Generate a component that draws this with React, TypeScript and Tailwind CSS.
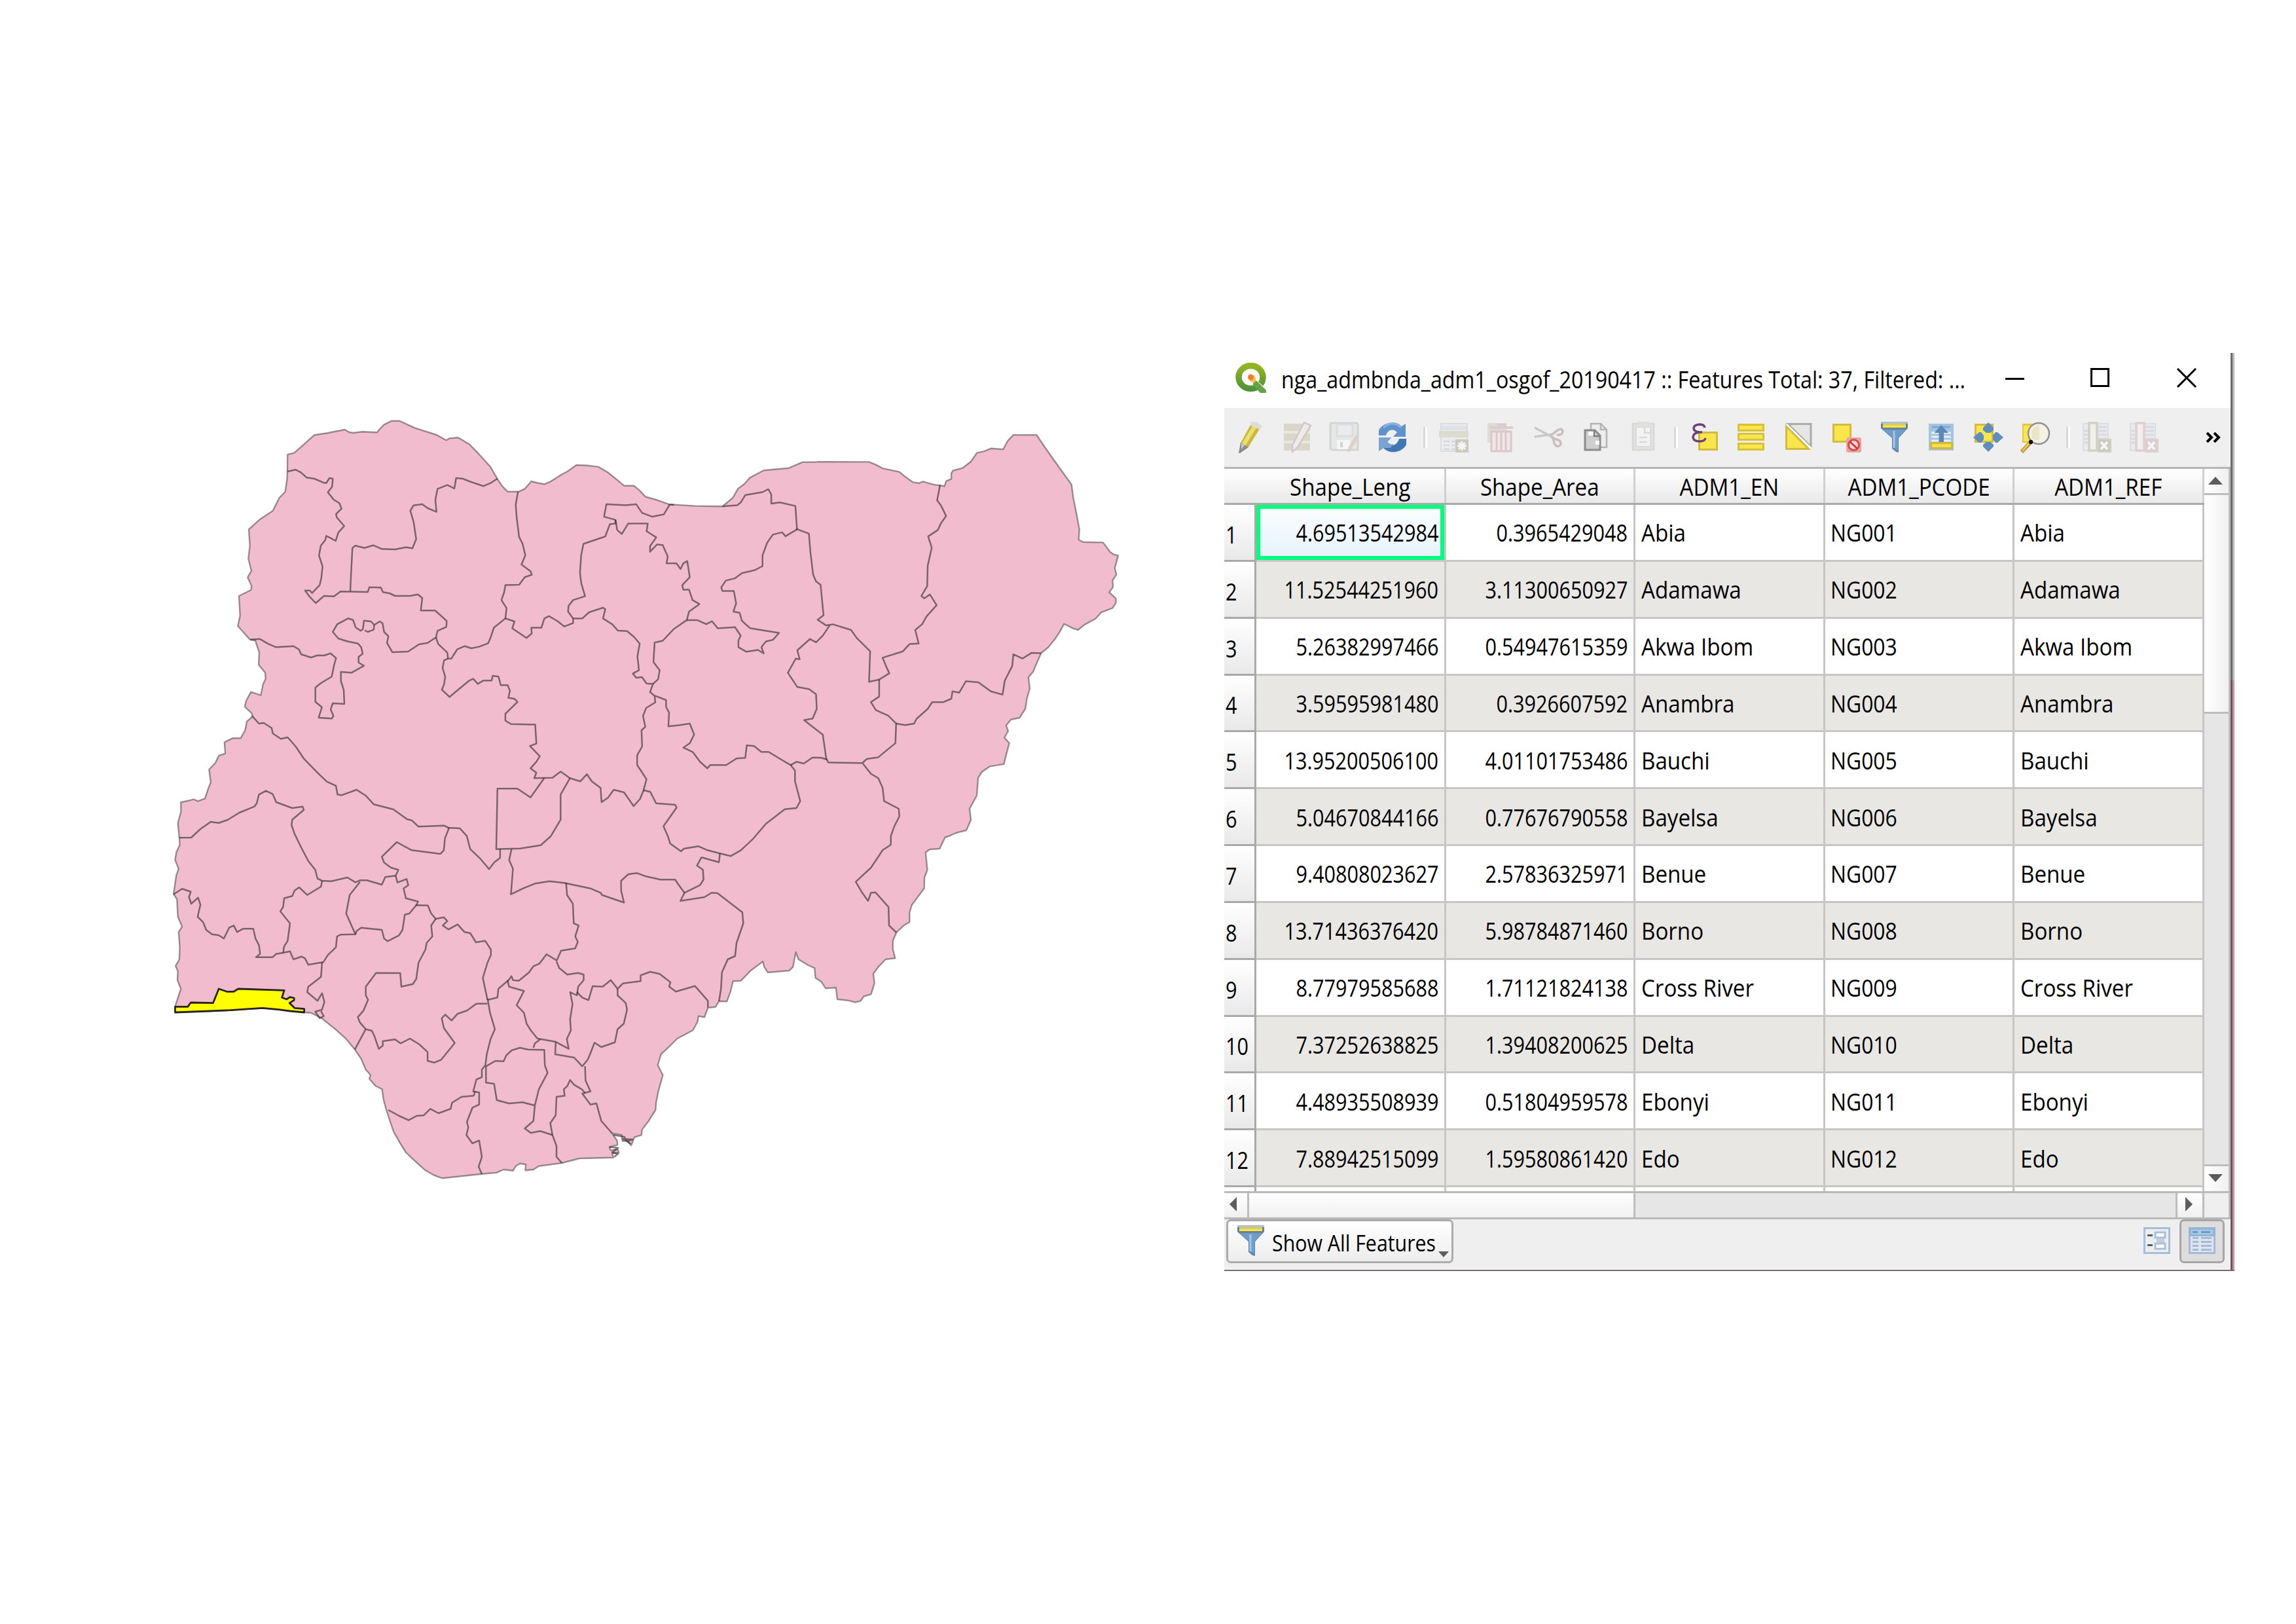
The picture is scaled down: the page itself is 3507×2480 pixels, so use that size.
import React from "react";

/* ---------- Map geometry ---------- */

type Frame = [number, number, number, number];

// Survey sheets: origin x, origin y, units per pixel horizontally and vertically.
const A: Frame = [250, 620, 3, 3];
const B: Frame = [700, 620, 2.851, 2.851];
const C: Frame = [1200, 640, 2.9037, 2.9037];
const D: Frame = [250, 1080, 2.851, 3];
const E: Frame = [750, 1080, 2.24, 3];
const F: Frame = [450, 1400, 2.4123, 3];
const P: Frame = [0, 0, 1, 1];

function pts([ox, oy, sx, sy]: Frame, data: string): string {
  return data
    .trim()
    .split(/\s+/)
    .map((p) => {
      const [x, y] = p.split(",").map(Number);
      return `${(ox + x / sx).toFixed(1)},${(oy + y / sy).toFixed(1)}`;
    })
    .join(" ");
}

const outline = [
  pts(A, "568,222 598,215 640,178 690,133 750,124 780,118 830,108 850,120 870,123 910,118 978,121 990,105 1010,85 1045,68 1080,68 1150,100 1250,132 1295,157 1310,148 1350,145 1400,175 1440,215"),
  pts(B, "140,265 170,317 190,347 215,373 262,373 290,360 318,328 345,335 375,340 400,330 450,298 475,285 515,257 560,259 610,265 650,288 690,320 722,347 765,347 790,368 815,395 860,407 918,428 1030,435 1150,437 1195,400 1218,360 1245,340 1270,312 1330,280 1440,270 1500,244 1560,244"),
  pts(C, "145,189 370,190 400,202 430,218 505,234 530,255 565,280 590,284 610,277 655,290 705,297 712,275 735,265 735,240 743,228 785,217 822,188 848,150 880,143 910,130 965,134 985,97 1010,70 1113,70 1150,125 1210,210 1268,290 1275,345 1290,420 1303,490 1300,535 1320,545 1408,547 1440,590 1455,600 1475,605 1460,660 1467,690 1450,715 1452,745 1435,768 1465,795 1465,815 1450,838 1400,857 1375,885 1325,912 1297,935 1275,928 1235,908 1215,945 1195,975 1165,1012 1133,1038 1110,1090 1098,1120 1077,1145 1083,1195 1070,1240 1063,1285 1037,1325 1000,1332 978,1358 987,1383 970,1412 992,1437 978,1490 968,1530 905,1540 870,1565"),
  pts(P, "1494,1188 1492,1215 1481,1235 1483,1252 1476,1268 1460,1272"),
  pts(E, "1568,590 1553,597 1535,648 1500,652 1487,665 1493,745 1483,780 1482,830 1440,905 1432,940 1432,985 1412,1000 1387,1032 1375,1070 1375,1110 1383,1150 1350,1155 1325,1190 1308,1220 1312,1265 1300,1315 1275,1325 1265,1345 1247,1352 1220,1343 1185,1338 1180,1285 1145,1288 1130,1258 1110,1240 1107,1195 1085,1182 1052,1155 1043,1122 1033,1190 1020,1207 947,1215 935,1190 930,1165 890,1205 855,1253 828,1255 820,1300 807,1348 780,1347 768,1373 745,1376"),
  pts(F, "1523,417 1510,460 1488,455 1485,480 1468,520 1410,558 1380,595 1350,630 1338,680 1357,725 1340,800 1332,850 1330,885 1305,935 1280,975 1278,1000 1252,1010 1240,1048 1225,1025 1208,1028 1205,1000 1170,992 1188,1025 1190,1045 1160,1055 1165,1070 1190,1065 1195,1080 1170,1085 1175,1103 1050,1107 985,1128 900,1142 880,1158 850,1162 852,1135 830,1130 815,1142 805,1163 770,1158 745,1172 690,1178 545,1198 515,1185 480,1160 440,1115 410,1080 390,1040 365,985 355,950 338,885 328,840 322,790 298,775 275,742 280,725 262,700 245,650 222,608 190,560 150,515 100,465 60,440"),
  pts(D, "615,1398 500,1385 430,1378 290,1388 200,1392 50,1398 50,1370 75,1290 60,1250 62,1210 52,1185 68,1155 70,1100 65,1030 80,1005 62,960 58,880 43,855 55,770 65,740 50,700 55,665 70,630 68,600 62,530 75,480 75,435 100,430 130,422 150,430 180,418 195,370 205,345 198,285 225,255 240,222 268,212 265,160 300,142 335,142 355,105 362,65 385,45"),
  pts(A, "405,1410 372,1378 378,1350 400,1310 445,1325 455,1275 467,1250 465,1222 435,1185 438,1130 420,1075 395,1070 340,1008 350,960 345,870 400,843 403,825 385,785 402,755 388,700 395,640 390,565 440,520 500,480 530,420 557,393 566,330"),
].join(" ");

const borders: string[] = [
  pts(A, "568,300 605,292 630,305 655,328 690,333 735,352 745,353 760,330 775,333 772,370 752,395 780,430 805,445 815,470 790,495 793,510 827,550 800,580 788,618 765,605 745,595 740,615 720,640 712,685 728,735 722,790 715,820 680,857 670,845 648,845 670,875 697,903 735,870 780,872 810,850 935,852 943,830 995,832 1005,853 1035,858 1060,870 1130,870 1165,863 1185,880 1178,937 1243,937 1270,960 1297,985 1295,1012 1255,1030 1248,1060 1210,1085 1170,1092 1120,1125 1048,1128 1023,1085 1030,1055 1010,1035 1003,995 990,987 965,1003 950,987 918,983 913,1022 903,1030 880,1015 868,980 845,973 795,1000 775,1035 800,1065 840,1078 890,1088 905,1105 912,1135 893,1150 893,1175 918,1190 860,1222 812,1218 812,1260 825,1300 828,1365 775,1362 765,1390 778,1420 770,1432 710,1428 725,1380 695,1355 695,1290 720,1270 770,1240 780,1190 790,1155 765,1133 735,1143 705,1142 675,1152 630,1138 620,1115 595,1100 515,1105 480,1090 440,1067 398,1070"),
  pts(A, "965,1003 962,1025 935,1035 922,1028"),
  pts(A, "855,850 857,800 865,650 878,640 920,650 960,638 1000,655 1060,657 1110,647 1140,652 1157,610 1145,530 1130,480 1145,455 1185,450 1210,468 1250,485 1245,430 1255,380 1300,362 1332,378 1340,330 1370,333 1420,352 1465,367 1500,352 1529,333"),
  pts(A, "1248,1060 1258,1090 1300,1130 1303,1157 1318,1157 1345,1115 1380,1100 1410,1110") + " " +
    pts(B, "90,1048 130,1033 140,1010 155,965 205,925 210,880 188,845 200,810 205,780 265,778 290,745 320,735 315,720 275,690 292,650 280,600 265,570 255,490 250,430 260,373"),
  pts(A, "1303,1157 1285,1165 1278,1200 1290,1240 1285,1275 1275,1300 1310,1333 1400,1258") + " " +
    pts(B, "65,1188 85,1210 110,1195 145,1195 150,1175 175,1178 185,1215 215,1215 225,1240 218,1270 245,1275 258,1288 205,1340 205,1370 230,1385 335,1387 340,1470 312,1480 355,1525") + " " +
    pts(E, "155,250 135,280 155,300 148,325 210,323 238,295 270,325 305,340 328,307 345,340 375,370 378,435 400,415 420,378 455,390 488,453 510,420 522,380 532,330 515,295 500,265 500,220 517,180 515,105 528,90 520,40") + " " +
    pts(B, "818,1315 858,1290 855,1262 835,1245 848,1210 820,1208 800,1180 775,1183 760,1165 787,1150 780,1090 790,1035 765,1005 735,980 695,978 670,950 630,925 640,885 630,878 570,898 540,925 500,925 500,945 462,960 430,935 395,915 375,925 362,965 318,965 320,990 297,1010 275,995 235,968 245,938 205,925"),
  pts(B, "500,925 478,895 480,870 500,845 552,828 535,770 530,725 535,650 545,600 640,568 660,515 685,512 683,495 635,482 645,428 730,432 775,428 800,465 845,482 895,472 920,430 940,430"),
  pts(B, "685,495 692,540 712,557 740,512 825,512 820,545 862,572 835,610 835,635 865,603 890,605 912,655 907,685 950,685 968,710 980,685 997,675 1008,745 975,780 980,800 1005,800 1020,845 1050,862 1005,895 995,932 940,970 890,1022 855,1030 850,1115 877,1150 870,1190 848,1210"),
  pts(B, "995,932 1040,932 1080,950 1105,937 1130,968 1205,963 1230,1000 1220,1020 1220,1050 1255,1070 1305,1062 1330,1077 1320,1050 1340,1025 1370,1018 1397,988 1330,977 1270,967 1235,935 1225,900 1198,895 1210,860 1200,805 1150,805 1145,790 1165,760 1205,750 1235,728 1290,715 1325,697 1325,650 1345,595 1370,560 1410,550 1425,567 1475,537"),
  pts(B, "1150,437 1215,432 1230,420 1250,388 1325,375 1350,362 1363,385 1363,425 1400,420 1468,435 1475,537"),
  pts(C, "47,487 103,508 110,590 122,690 135,720 155,735 168,870 142,890 180,915 210,910 290,935 315,970 375,1030 370,1165 415,1155 460,1127 445,1095 430,1058 520,1030 550,997 590,995 575,935 605,910 625,875 670,825 640,778 615,795 602,785 628,740 630,650 648,570 632,520 675,492 690,460 712,430 690,385 672,360 685,292"),
  pts(C, "195,915 165,960 135,990 108,975 52,1025 62,1065 45,1062 10,1125 52,1188 105,1198 135,1220 138,1285 120,1328 82,1335 165,1400 180,1505 190,1523 340,1525 360,1507 410,1500 487,1437 490,1350 455,1315 400,1290 378,1255 415,1230 415,1155"),
  pts(C, "490,1350 530,1357 570,1350 580,1330 630,1285 650,1255 700,1255 735,1240 740,1207 770,1213 800,1162 855,1167 910,1207 962,1222 972,1160 1005,1095 1010,1043 1050,1062 1090,1037 1133,1038"),
  pts(B, "858,1262 905,1280 905,1310 918,1335 915,1395 960,1390") + " " +
    pts(E, "680,75 695,125 680,165 658,185 690,205 715,250 740,280 750,265 805,265 840,235 870,232 875,175 900,178 925,205 950,205 1000,245 1025,265 1040,290 1040,340 1058,430 1045,462 1005,467 940,535 895,605 855,655 820,682 783,670 740,655 710,637 660,648 650,660 613,625 605,590 590,545 635,460 630,447 565,440 545,388 522,380"),
  pts(E, "1025,265 1045,250 1070,258 1100,230 1130,232 1150,240"),
  pts(E, "1272,258 1300,305 1325,325 1340,370 1345,430 1395,465 1397,500 1380,545 1368,590 1368,630 1340,655 1300,735 1248,800 1270,850 1290,887 1300,850 1315,848 1360,915 1362,1000 1387,1032"),
  pts(E, "182,325 135,413 90,373 22,373 18,650 100,647 170,632 205,590 238,515 238,400 270,325"),
  pts(E, "783,670 780,710 720,688 705,725 725,745 727,790 715,815 662,850 640,810 630,790 580,790 530,775 500,760 470,765 445,795 445,840 455,895 380,860 375,850 340,830 250,805 200,797 150,808 110,830 68,857 75,740 62,700 70,650"),
  pts(E, "662,850 648,887 730,870 755,850 775,852 860,940 863,990 840,1080 835,1140 810,1155 790,1215 787,1290 780,1347"),
  pts(E, "257,805 260,860 280,900 283,990 300,1000 288,1050 297,1075 288,1105 240,1115 225,1160 190,1132 165,1175 145,1187 130,1215 95,1253 75,1250 70,1232 60,1250 25,1290 22,1330 -10,1340"),
  pts(D, "385,40 415,75 435,72 455,85 470,95 475,120 510,145 540,138 575,180 610,235 665,295 710,340 750,360 757,400 775,403 840,378 880,405 915,445 1000,468 1060,513 1080,518 1110,547 1220,542 1240,552 1290,555 1320,590 1335,650 1380,695 1417,742 1440,710 1465,690 1465,650"),
  pts(D, "68,598 120,597 160,558 205,525 240,530 280,515 330,483 395,455 405,440 415,400 445,383 475,398 490,435 560,462 605,455 610,470 560,515 557,540 570,580 600,645 630,705 660,745 670,785 690,795 730,797 800,780 835,802 855,793 885,793 950,813 965,778 1010,772 1022,745 990,735 960,712 950,685 1015,618 1080,655 1205,672 1220,655 1225,600 1243,552"),
  pts(D, "43,857 80,832 118,845 110,870 120,900 150,872 160,905 148,960 172,985 185,1020 210,1040 240,1045 262,1060 285,1010 305,1000 320,1030 345,1015 390,1015 400,1060 415,1090 420,1130 402,1145 475,1145 490,1130 520,1125 525,1095 540,1070 550,990 508,935 520,915 525,875 560,865 570,840 590,825 625,860 685,822 690,795"),
  pts(D, "520,1125 550,1118 565,1155 600,1142 615,1150 630,1180 695,1168 715,1135 750,1100 755,1050 770,1042 835,1040 820,1005 795,945 810,860 855,800"),
  pts(D, "835,1040 840,1025 860,1010 950,1020 960,1060 975,1072 1025,1045 1040,1020 1050,950 1070,945 1100,907 1150,908 1165,945 1185,970 1220,962 1235,980 1215,1000 1240,1018 1280,995 1310,1030 1335,1035 1360,1077 1400,1070 1425,1110 1425,1135 1410,1170 1390,1240 1410,1340"),
  pts(D, "1100,907 1108,890 1055,875 1045,830 1065,815 1058,787 1018,803 1010,772"),
  pts(D, "1185,970 1165,1000 1170,1050 1145,1080 1140,1110 1110,1170 1100,1245 1085,1268 1035,1280 1030,1218 925,1217 880,1280 880,1320 890,1340 870,1390 845,1420 855,1445 880,1475"),
  pts(D, "690,1168 685,1235 630,1280 625,1305 670,1345 690,1310 700,1350 690,1385 660,1395 680,1425 697,1415 685,1392"),
  pts(F, "222,608 262,515 285,522 295,550 310,605 325,590 325,570 370,562 390,580 425,558 460,585 490,620 490,660 515,668 540,655 590,578 550,510 542,465 555,448 578,475 600,445 635,430 670,398 710,398"),
  pts(F, "711,375 720,440 738,515 722,560 708,630 703,680 690,700 690,735 670,745 658,800 680,805 680,860 655,875 635,940 640,965 633,1000 655,1038 680,1025 690,1100 678,1145 690,1178"),
  pts(F, "345,885 385,912 420,932 450,912 475,910 500,880 530,900 575,880 580,852 615,825 660,820 665,800"),
  pts(F, "785,290 790,320 845,340 818,405 845,440 855,490 870,520 895,558 960,572 1010,605 1003,560 1018,520 1015,470 1024,400 1015,345 1040,360 1045,320 1065,290 1065,265 1045,257 1005,265 975,235 965,205"),
  pts(F, "1040,345 1060,370 1083,382 1098,318 1135,320 1165,290 1190,330 1210,305 1275,295 1275,268 1310,252 1345,262 1385,300 1380,320 1405,343 1475,317 1523,385 1523,415"),
  pts(F, "1190,330 1190,360 1220,395 1225,425 1213,490 1190,515 1180,575 1130,597 1105,577 1090,625 1080,655 1060,685 1030,645 960,630 962,575"),
  pts(F, "1070,685 1072,750 1090,800 1060,810 1090,860 1112,855 1130,935 1170,992"),
  pts(F, "1070,808 1058,790 1030,770 1015,748 1005,775 992,790 995,820 965,825 962,910 942,945 950,1000 965,1050 965,1100 985,1128"),
  pts(F, "950,1000 905,982 870,990 848,970 880,935 885,865 840,850 790,855 745,840 735,765 705,760 705,685 740,660 770,662 780,635 800,612 830,600 860,608 920,610 922,680 932,715 900,790 885,865"),
  pts(F, "905,562 885,580 880,600"),
  pts(F, "1175,1000 1215,1008 1225,1030 1245,1020 1210,1018 1238,1040"),
  pts(F, "1160,1055 1192,1058 1170,1080 1192,1085 1178,1100"),
];

const lagos = pts(
  D,
  "50,1398 50,1372 105,1372 118,1353 215,1355 225,1330 240,1290 275,1303 305,1303 325,1290 525,1297 515,1330 535,1338 550,1328 568,1332 568,1342 548,1355 570,1378 612,1382 612,1398 550,1392 500,1385 430,1378 290,1388 200,1392",
);

function NigeriaMap() {
  return (
    <svg className="block h-[2480px] w-[1870px] shrink-0" viewBox="0 0 1870 2480">
      <polygon points={outline} fill="#f2bccf" stroke="#232323" strokeOpacity="0.45" strokeWidth="2.4" strokeLinejoin="round" />
      <g fill="none" stroke="#232323" strokeOpacity="0.58" strokeWidth="2.5" strokeLinejoin="round">
        {borders.map((b, i) => (
          <polyline key={i} points={b} />
        ))}
      </g>
      <polygon points={lagos} fill="#ffff00" stroke="#2a2420" strokeWidth="2.8" strokeLinejoin="round" />
    </svg>
  );
}

/* ---------- Icons ---------- */

function Icon({ children, faded = false }: { children: React.ReactNode; faded?: boolean }) {
  return (
    <div className="flex w-[72.2px] shrink-0 justify-center">
      <svg viewBox="0 0 48 48" className={faded ? "size-12 opacity-40" : "size-12"}>
        {children}
      </svg>
    </div>
  );
}

function Separator() {
  return (
    <div className="flex w-[22px] shrink-0 pl-[11px]">
      <div className="h-8 w-[3px] bg-[#d9d9d9]" />
      <div className="h-8 w-[3px] bg-white" />
    </div>
  );
}

function FunnelShape() {
  return (
    <>
      <path d="M4 1h41v9L31 25v22l-4-1-6-5V25L4 10z" fill="#5d83ad" />
      <path d="M7 12h35L30 24v20l-8-5V24z" fill="#6f9dcd" />
      <path d="M24 14v26" stroke="#a9c5e2" strokeWidth="3" />
      <path d="M4 0h41v3H4z" fill="#b5bfca" />
      <path d="M7 3h35v6H7z" fill="#f7e54a" />
      <path d="M7 3h35v3H7z" fill="#d9cf58" />
      <path d="M7 9h35v3H7z" fill="#6b8290" />
    </>
  );
}

const Pencil = () => (
  <>
    <path d="M24 5l14 6-18 29-12-6z" fill="#cdb937" />
    <path d="M27 7l6 2-17 28-6-2z" fill="#eadf72" />
    <path d="M25 0h8l9 7-4 5-14-6z" fill="#dcdcdc" />
    <path d="M9 32l12 7-13 9H6z" fill="#8b8b8b" />
    <path d="M10 33l5 3-5 6z" fill="#c9c9c9" />
  </>
);

const EditRows = () => (
  <>
    <path d="M3 3h40v11H3zM3 18h40v11H3zM3 33h40v11H3z" fill="#b9b491" />
    <path d="M3 14h40v4H3zM3 29h40v4H3z" fill="#dedbc8" />
    <path d="M34 1l10 5-20 33-8 7V36z" fill="#efe3e3" stroke="#a58f90" strokeWidth="2.5" />
  </>
);

const Floppy = () => (
  <>
    <path d="M2 5q0-3 3-3h36q3 0 3 3v38H5q-3 0-3-3z" fill="#dadfd8" stroke="#a9b0a5" strokeWidth="3" />
    <path d="M12 4h24v18H12z" fill="#e4e6ea" stroke="#bfc4ca" strokeWidth="3" />
    <path d="M12 28h20v14H12z" fill="#fff" />
    <path d="M17 31h4v8h-4z" fill="#a8a8a8" />
    <path d="M41 20l5 3-14 22-4 2 1-7z" fill="#c3a294" />
  </>
);

const Refresh = () => (
  <>
    <path d="M3 21V13C8 2 28-4 38 7l6-4v20H25l6-7C24 9 16 13 14 21z" fill="#5f93cc" />
    <path d="M10 9c8-8 20-8 27 0" stroke="#8fb5de" strokeWidth="3" fill="none" />
    <path d="M45 26v9C38 48 19 50 10 40l-7 5V24h19l-6 7c7 8 15 5 18-5z" fill="#3f78b4" />
    <path d="M3 24h19l-6 7c3 3 6 4 9 3l-4 6H10l-7 5z" fill="#79a4d4" />
  </>
);

const AddRow = () => (
  <>
    <path d="M4 3h40v42H4z" fill="#e6eaf2" stroke="#b9c3cf" strokeWidth="2" />
    <path d="M5 6h38v7H5z" fill="#c3d0dd" />
    <path d="M1 14h45v10H1z" fill="#c3bf9e" />
    <path d="M8 30h9M20 30h9M8 36h9M20 36h9M8 42h9M20 42h9" stroke="#b0b8c4" strokeWidth="2.5" />
    <path d="M26 27h20v20H26z" fill="#99966f" />
    <path d="M36 30v14M29 37h14M31 32l10 10M41 32L31 42" stroke="#fff" strokeWidth="3" />
  </>
);

const Trash = () => (
  <>
    <path d="M3 2h29v30H3z" fill="#c5c2ac" />
    <path d="M6 7h36v4H6z" fill="#c09a9f" />
    <path d="M9 15h30v30H9z" fill="#f0dfe0" stroke="#bd8c93" strokeWidth="3" />
    <path d="M17 16v28M24 16v28M31 16v28" stroke="#bd8c93" strokeWidth="3" />
    <path d="M18 3h14v4H18z" fill="#c09a9f" />
  </>
);

const Scissors = () => (
  <>
    <path d="M3 9l28 15M3 23l28-4" stroke="#8f8f8f" strokeWidth="3.5" fill="none" />
    <path d="M28 21l10-8q7-4 8 2-1 6-9 5M28 23l8 4q8 1 7 8-4 5-9 0l-3-9" stroke="#91777a" strokeWidth="3.5" fill="none" />
  </>
);

const Copy = () => (
  <>
    <path d="M17 3h15l9 9v27H17z" fill="#ededed" stroke="#b4b4b4" strokeWidth="2.5" />
    <path d="M32 3v9h9" fill="none" stroke="#b4b4b4" strokeWidth="2.5" />
    <path d="M8 13h15l8 8v22H8z" fill="#cfcfcf" stroke="#8c8c8c" strokeWidth="3" />
    <path d="M13 15h8v6h-8zM24 29h6v6h-6z" fill="#fafafa" />
    <path d="M22 13v9h9" fill="none" stroke="#7f7f7f" strokeWidth="2.5" />
  </>
);

const Paste = () => (
  <>
    <path d="M8 3h32v40H8z" fill="#cfcfca" stroke="#b5b5ae" strokeWidth="2.5" />
    <path d="M16 0h17v5H16z" fill="#c9c9c9" />
    <path d="M13 8h22v30H13z" fill="#fafafa" stroke="#bdbdbd" strokeWidth="2" />
    <path d="M26 8v9h9M18 24h12M18 31h12" stroke="#bdbdbd" strokeWidth="2.5" fill="none" />
  </>
);

const Expression = () => (
  <>
    <path d="M15.500 16.500h27v26h-27z" fill="#fae64b" stroke="#d3bb3f" strokeWidth="3" />
    <path d="M24 9q-1-5-8-5-9 1-9 6t9 6h4-4q-10 1-10 8 1 6 10 6 8 0 9-5" fill="none" stroke="#6b4275" strokeWidth="3.500" />
  </>
);

const SelectAll = () => (
  <g fill="#fae64b" stroke="#d9c13c" strokeWidth="3">
    <path d="M3.500 4.500h38v9h-38zM3.500 18.500h38v9h-38zM3.500 33.500h38v9h-38z" />
  </g>
);

const Invert = () => (
  <>
    <path d="M7 3.500h35v35z" fill="#e6e6e6" stroke="#ababab" strokeWidth="3" />
    <path d="M4.500 7v34.500h34z" fill="#fae64b" stroke="#d3bb3f" strokeWidth="3" />
    <path d="M5 4l38 37" stroke="#fff" strokeWidth="2.500" />
    <path d="M8 4l35 34" stroke="#a8a8a8" strokeWidth="1.500" />
  </>
);

const Deselect = () => (
  <>
    <path d="M4.500 4.500h26v26h-26z" fill="#fae64b" stroke="#d3bb3f" strokeWidth="3" />
    <rect x="24" y="24" width="23" height="23" rx="3" fill="#e9a3a3" />
    <circle cx="35.500" cy="35.500" r="8" fill="#f6d7d7" stroke="#d94a4a" strokeWidth="3" />
    <path d="M30 31l11 10" stroke="#d63636" strokeWidth="3" />
  </>
);

const MoveTop = () => (
  <>
    <path d="M5 3h38v41H5z" fill="#a6c4e0" />
    <path d="M9 17h30M9 23h30M9 29h30" stroke="#e8f0f8" strokeWidth="3" />
    <path d="M10 8h28" stroke="#7eaad3" strokeWidth="3" />
    <path d="M20.500 34V17h-7L24 5l11 12h-7v17z" fill="#5f87b5" />
    <path d="M8.500 32.500h32v8h-32z" fill="#f5e04b" stroke="#d1b838" strokeWidth="3" />
  </>
);

const Pan = () => (
  <>
    <path d="M4.500 4.500h26v26h-26z" fill="#fae64b" stroke="#d3bb3f" strokeWidth="3" />
    <path d="M24 1l8 8v4l-5 4h-6l-5-4V9zM24 46l8-8v-3l-5-4h-6l-5 4v3zM1 24l9-8h3l4 5v6l-4 5h-3zM47 24l-9-8h-3l-4 5v6l4 5h3z" fill="#5f8dbd" />
    <path d="M24 18l6 6-6 6-6-6z" fill="#fae64b" />
  </>
);

const ZoomSelected = () => (
  <>
    <path d="M4 3h22v29H4z" fill="#e3c93c" />
    <path d="M6 6h10v24H6z" fill="#fae64b" />
    <circle cx="29" cy="18" r="16" fill="#f5f2e4" stroke="#909090" strokeWidth="2.500" />
    <path d="M18 14q4-8 12-9v22q-8 3-12-2z" fill="#ebe6c8" />
    <path d="M17 31L3 46" stroke="#a88f4e" strokeWidth="6" />
    <path d="M15 32L4 45" stroke="#f2c633" strokeWidth="3" />
    <circle cx="17" cy="31" r="3.200" fill="#111" />
  </>
);

const ColumnIcon = ({ tint, badge }: { tint: string; badge: string }) => (
  <>
    <path d="M3 3h38v41H3z" fill="#dfe4ec" stroke="#c0c7d1" strokeWidth="2" />
    <path d="M26 8h13M26 14h13M26 20h13M26 26h13M4 14h6M4 20h6M4 26h6M4 32h6" stroke="#b5bec9" strokeWidth="3" />
    <path d="M12 2h12v42H12z" fill="#f3f1ec" stroke={tint} strokeWidth="3.5" />
    <path d="M26 27h19v19H26z" fill={badge} stroke={tint} strokeWidth="2" />
    <path d="M30 31l10 11M40 31L30 42" stroke="#fff" strokeWidth="4" />
  </>
);

const QgisLogo = () => (
  <svg viewBox="0 0 48 48" className="ml-[17px] size-12">
    <defs>
      <linearGradient id="leaf" x1="0" y1="0" x2="0" y2="1">
        <stop offset="0" stopColor="#96b422" />
        <stop offset="1" stopColor="#4f9436" />
      </linearGradient>
    </defs>
    <ellipse cx="23.500" cy="22" rx="18.500" ry="17.500" fill="none" stroke="url(#leaf)" strokeWidth="9.500" />
    <path d="M24 27l8-1 16 15v6h-8z" fill="#fff" />
    <path d="M27 28h6l14 14v4h-9L27 34z" fill="#65a345" />
    <path d="M20 19h9l3 8-4 4-6-3z" fill="#f3c64d" />
    <circle cx="23.500" cy="22" r="4.500" fill="#ee7f2b" />
  </svg>
);

/* ---------- Attribute table ---------- */

const rows: [string, string, string, string][] = [
  ["4.69513542984", "0.3965429048", "Abia", "NG001"],
  ["11.52544251960", "3.11300650927", "Adamawa", "NG002"],
  ["5.26382997466", "0.54947615359", "Akwa Ibom", "NG003"],
  ["3.59595981480", "0.3926607592", "Anambra", "NG004"],
  ["13.95200506100", "4.01101753486", "Bauchi", "NG005"],
  ["5.04670844166", "0.77676790558", "Bayelsa", "NG006"],
  ["9.40808023627", "2.57836325971", "Benue", "NG007"],
  ["13.71436376420", "5.98784871460", "Borno", "NG008"],
  ["8.77979585688", "1.71121824138", "Cross River", "NG009"],
  ["7.37252638825", "1.39408200625", "Delta", "NG010"],
  ["4.48935508939", "0.51804959578", "Ebonyi", "NG011"],
  ["7.88942515099", "1.59580861420", "Edo", "NG012"],
];

const GRID = "grid grid-cols-[49px_290px_289px_290px_289px_290px]";

function NumberCell({ value, selected = false }: { value: string; selected?: boolean }) {
  return (
    <div className="relative flex items-center justify-end border-r-[3px] border-b-[3px] border-[#c6c6c6] pt-[3px] pr-[9px]">
      {selected && <div className="absolute inset-0 border-[6px] border-[#00ff7f] bg-linear-to-b from-[#fafdff] to-[#e7f3ff]" />}
      <span className="relative origin-right scale-x-[0.85]">{value}</span>
    </div>
  );
}

function NameCell({ value }: { value: string }) {
  return (
    <div className="flex items-center border-r-[3px] border-b-[3px] border-[#c6c6c6] pt-[3px] pl-[9px]">
      <span className="origin-left scale-x-[0.92]">{value}</span>
    </div>
  );
}

function CodeCell({ value }: { value: string }) {
  return (
    <div className="flex items-center border-r-[3px] border-b-[3px] border-[#c6c6c6] pt-[3px] pl-[8px]">
      <span className="origin-left scale-x-[0.885]">{value}</span>
    </div>
  );
}

function HeaderCell({ label }: { label: string }) {
  return (
    <div className="flex items-center justify-center border-r-[3px] border-[#cfcfcf] pt-[3px]">
      <span className="scale-x-[0.92]">{label}</span>
    </div>
  );
}

function Table() {
  return (
    <div className="h-[1103px] w-[1497px] overflow-hidden">
      <div className={`${GRID} h-[55px] border-b-[3px] border-[#a9a9a9] bg-linear-to-b from-white to-[#e9e9e9]`}>
        <div />
        {["Shape_Leng", "Shape_Area", "ADM1_EN", "ADM1_PCODE", "ADM1_REF"].map((h) => (
          <HeaderCell key={h} label={h} />
        ))}
      </div>
      <div className="grid h-[1042px] grid-rows-12">
        {rows.map(([leng, area, name, code], i) => (
          <div key={code} className={i % 2 ? `${GRID} bg-[#e8e7e3]` : `${GRID} bg-white`}>
            <div className="flex items-center border-r-[3px] border-b-[3px] border-[#a9a9a9] bg-linear-to-b from-white to-[#e9e9e9] pt-[8px] pl-[2px]">
              <span className="origin-left scale-x-[0.85]">{i + 1}</span>
            </div>
            <NumberCell value={leng} selected={i === 0} />
            <NumberCell value={area} />
            <NameCell value={name} />
            <CodeCell value={code} />
            <NameCell value={name} />
          </div>
        ))}
      </div>
      <div className={`${GRID} h-[6px] bg-white`}>
        <div className="border-r-[3px] border-[#a9a9a9]" />
        {[1, 2, 3, 4, 5].map((n) => (
          <div key={n} className="border-r-[3px] border-[#c6c6c6]" />
        ))}
      </div>
    </div>
  );
}

function Arrow({ d }: { d: string }) {
  return (
    <svg viewBox="0 0 24 24" className="size-6">
      <path d={d} fill="#5c5c5c" />
    </svg>
  );
}

function VerticalScrollbar() {
  return (
    <div className="flex h-[1103px] w-10 flex-col border-r-[3px] border-[#bdbdbd] bg-[#e6e6e6]">
      <div className="flex h-10 items-center justify-center border-b-[3px] border-[#bdbdbd] bg-linear-to-r from-white to-[#f0f0f0] pr-[3px]">
        <Arrow d="M12 5L1 17h22z" />
      </div>
      <div className="h-[334px] border-b-[3px] border-[#bdbdbd] bg-linear-to-r from-white to-[#f0f0f0]" />
      <div className="grow" />
      <div className="flex h-[41px] items-center justify-center border-t-[3px] border-[#bdbdbd] bg-linear-to-r from-white to-[#f0f0f0] pr-[3px]">
        <Arrow d="M12 17L1 5h22z" />
      </div>
    </div>
  );
}

function HorizontalScrollbar() {
  return (
    <div className="flex h-[43px] border-y-[3px] border-[#b9b9b9] bg-[#e6e6e6]">
      <div className="flex w-[38px] items-center justify-center border-r-[3px] border-[#bdbdbd] bg-linear-to-b from-white to-[#f0f0f0] pr-[4px] pb-[3px]">
        <Arrow d="M4 12L15 1v22z" />
      </div>
      <div className="w-[590px] border-r-[3px] border-[#bdbdbd] bg-linear-to-b from-white to-[#f0f0f0]" />
      <div className="grow" />
      <div className="flex w-[44px] items-center justify-center border-x-[3px] border-[#bdbdbd] bg-linear-to-b from-white to-[#f0f0f0] pr-[3px] pb-[3px]">
        <Arrow d="M17 12L6 1v22z" />
      </div>
      <div className="w-10 border-r-[3px] border-[#bdbdbd] bg-[#efefef]" />
    </div>
  );
}

function Toolbar() {
  return (
    <div className="flex h-[90px] items-center bg-[#efefef] pl-[4px]">
      <Icon><Pencil /></Icon>
      <Icon faded><EditRows /></Icon>
      <Icon faded><Floppy /></Icon>
      <Icon><Refresh /></Icon>
      <Separator />
      <Icon faded><AddRow /></Icon>
      <Icon faded><Trash /></Icon>
      <Icon faded><Scissors /></Icon>
      <Icon><Copy /></Icon>
      <Icon faded><Paste /></Icon>
      <Separator />
      <Icon><Expression /></Icon>
      <Icon><SelectAll /></Icon>
      <Icon><Invert /></Icon>
      <Icon><Deselect /></Icon>
      <Icon><FunnelShape /></Icon>
      <Icon><MoveTop /></Icon>
      <Icon><Pan /></Icon>
      <Icon><ZoomSelected /></Icon>
      <Separator />
      <Icon faded><ColumnIcon tint="#a5a389" badge="#99966f" /></Icon>
      <Icon faded><ColumnIcon tint="#c3a3a8" badge="#c79aa2" /></Icon>
      <svg viewBox="0 0 24 16" className="ml-[57px] h-4 w-6">
        <path d="M2 1l7 7-7 7M13 1l7 7-7 7" fill="none" stroke="#000" strokeWidth="4" />
      </svg>
    </div>
  );
}

function TitleBar() {
  return (
    <div className="flex h-[84px] bg-white pt-[15px]">
      <QgisLogo />
      <div className="w-[1108px] pl-[22px]">
        <div className="mt-[1px] w-max origin-left scale-x-[0.895] leading-[50px] whitespace-nowrap">
          nga_admbnda_adm1_osgof_20190417 :: Features Total: 37, Filtered: ...
        </div>
      </div>
      <svg viewBox="0 0 292 30" className="mt-2 ml-5 h-[30px] w-[292px]">
        <path d="M0 16.500h29" stroke="#000" strokeWidth="3" />
        <path d="M131.500 1.500h26v26h-26z" fill="none" stroke="#000" strokeWidth="3" />
        <path d="M263 1l28 28M291 1l-28 28" stroke="#000" strokeWidth="3" />
      </svg>
    </div>
  );
}

function StatusBar() {
  return (
    <div className="flex h-[76px] items-start bg-[#efefef] pl-[3px]">
      <div className="flex h-[67px] w-[347px] rounded-[7px] border-[3px] border-[#ababab] bg-linear-to-b from-white to-[#ededed]">
        <svg viewBox="0 0 48 48" className="mt-[6px] ml-[10px] size-12">
          <FunnelShape />
        </svg>
        <div className="mt-[8px] ml-[9px] w-[254px]">
          <div className="w-max origin-left scale-x-[0.892] text-[34px] leading-[50px]">Show All Features</div>
        </div>
        <svg viewBox="0 0 16 10" className="mt-[46px] h-[10px] w-4">
          <path d="M0 0h16L8 9z" fill="#5c5c5c" />
        </svg>
      </div>
      <svg viewBox="0 0 41 41" className="mt-3 ml-[1054px] size-[41px]">
        <path d="M1.500 1.500h38v38h-38z" fill="#ededed" stroke="#a5bfdb" strokeWidth="3" />
        <path d="M6 12.500h8M6 27.500h8" stroke="#4a617c" strokeWidth="3" />
        <path d="M18 8h15v8H18zM18 25h15v8H18z" fill="#fff" stroke="#a9c0d9" strokeWidth="3" />
        <path d="M20 17h12v7H20z" fill="#bfcde0" />
      </svg>
      <div className="ml-[14px] flex h-[67px] w-[69px] items-center justify-center rounded-[7px] border-[3px] border-[#a6a6a6] bg-[#dddddd] pb-[3px]">
        <svg viewBox="0 0 41 41" className="size-[41px]">
          <path d="M1.500 1.500h38v38h-38z" fill="#e0e4ec" stroke="#a3bbd8" strokeWidth="3" />
          <path d="M0 0h41v14H0z" fill="#98b4d3" />
          <path d="M4 4h33v7H4z" fill="#a4cbe8" />
          <path d="M6 7.500h8M19 7.500h14" stroke="#6d99c9" strokeWidth="3" />
          <path d="M6 16.500h9M19 16.500h16M6 22.500h9M19 22.500h16M6 28.500h9M19 28.500h16M6 34.500h9M19 34.500h16" stroke="#a3bbd8" strokeWidth="3" />
        </svg>
      </div>
    </div>
  );
}

function AttributeWindow() {
  return (
    <div className="mt-[539px] h-[1402px] w-[1543px] border-b-[2px] border-[#77686d] text-[36px] leading-none text-black">
      <div className="flex">
        <div className="w-[1537px]">
          <TitleBar />
          <Toolbar />
          <div className="flex border-t-[3px] border-[#b5b5b5]">
            <Table />
            <VerticalScrollbar />
          </div>
          <HorizontalScrollbar />
          <StatusBar />
        </div>
        <div className="flex flex-col">
          <div className="h-[500px] w-[6px] border-l-[3px] border-[#6b6b6b] bg-[#b8b8b8]" />
          <div className="h-[900px] w-[6px] border-l-[3px] border-[#6b555c] bg-[#c496a6]" />
        </div>
      </div>
    </div>
  );
}

export default function App() {
  return (
    <main className="flex h-[2480px] w-[3507px] items-start overflow-hidden bg-white font-['Open_Sans','Noto_Sans',sans-serif]">
      <NigeriaMap />
      <AttributeWindow />
    </main>
  );
}
